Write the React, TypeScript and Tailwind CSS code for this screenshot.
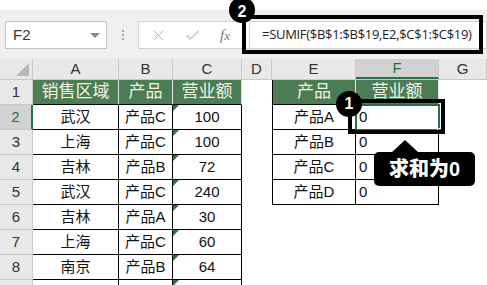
import React from "react";
import { X, Check } from "lucide-react";

const FONT = { fontFamily: '"Liberation Sans", "Noto Sans CJK SC", sans-serif' };

type Cell = { t: string; align?: "c" | "l"; hdr?: boolean; tri?: boolean; br?: boolean; bb?: boolean; bl?: boolean };

const widths = [86, 54, 69, 30, 84, 83, 48];

const left: [string, string, string][] = [
  ["武汉", "产品C", "100"],
  ["上海", "产品C", "100"],
  ["吉林", "产品B", "72"],
  ["武汉", "产品C", "240"],
  ["吉林", "产品A", "30"],
  ["上海", "产品C", "60"],
  ["南京", "产品B", "64"],
  ["", "", ""],
];
const right = ["产品A", "产品B", "产品C", "产品D"];

function buildRow(r: number): Cell[] {
  const cells: Cell[] = [];
  if (r === 1) {
    cells.push({ t: "销售区域", hdr: true, br: true, bb: true });
    cells.push({ t: "产品", hdr: true, br: true, bb: true });
    cells.push({ t: "营业额", hdr: true, br: true, bb: true });
    cells.push({ t: "" });
    cells.push({ t: "产品", hdr: true, br: true, bb: true, bl: true });
    cells.push({ t: "营业额", hdr: true, br: true, bb: true });
    cells.push({ t: "" });
    return cells;
  }
  const d = left[r - 2];
  cells.push({ t: d[0], br: true, bb: true });
  cells.push({ t: d[1], br: true, bb: true });
  cells.push({ t: d[2], br: true, bb: true, tri: true });
  if (r <= 5) {
    cells.push({ t: "" });
    cells.push({ t: right[r - 2], br: true, bb: true, bl: true });
    cells.push({ t: "0", align: "l", br: true, bb: true });
  } else {
    cells.push({ t: "" });
    cells.push({ t: "" });
    cells.push({ t: "" });
  }
  cells.push({ t: "" });
  return cells;
}

export default function App() {
  const rows = [1, 2, 3, 4, 5, 6, 7, 8, 9];
  const colLetters = ["A", "B", "C", "D", "E", "F", "G"];
  return (
    <div className="relative w-[487px] h-[285px] overflow-hidden bg-white" style={FONT}>
      <div className="h-[10px] bg-white" />
      {/* toolbar */}
      <div className="h-[49px] bg-[#f0f0f0] flex items-start pt-[11px]">
        <div className="ml-[5px] w-[102px] h-[28px] bg-white border border-[#c6c6c6] flex items-center justify-between pl-[7px] pr-[6px]">
          <span className="text-[15px] text-[#333]">F2</span>
          <span className="w-0 h-0 border-l-[5px] border-r-[5px] border-t-[5px] border-l-transparent border-r-transparent border-t-[#8a8a8a]" />
        </div>
        <div className="w-[31px] h-[28px] flex flex-col items-center justify-center gap-[2px]">
          <span className="w-[2px] h-[2px] bg-[#a8a8a8]" />
          <span className="w-[2px] h-[2px] bg-[#a8a8a8]" />
          <span className="w-[2px] h-[2px] bg-[#a8a8a8]" />
        </div>
        <div className="w-[111px] h-[28px] bg-white border border-[#d4d4d4] border-r-0 flex items-center">
          <X size={17} strokeWidth={1.4} color="#b8b8b8" className="ml-[11px]" />
          <Check size={17} strokeWidth={2} color="#c4c4c4" className="ml-[17px]" />
          <span className="ml-[19px] text-[15px] italic text-[#7a7a7a]" style={{ fontFamily: '"Liberation Serif", serif' }}>
            f<span className="text-[13px]">x</span>
          </span>
        </div>
        <div className="flex-1 h-[28px] bg-white border border-[#d4d4d4] flex items-center pl-[12px]">
          <span className="text-[13px] text-[#222] whitespace-nowrap tracking-[-0.3px]" style={{ fontFamily: '"Open Sans", "Liberation Sans", sans-serif' }}>
            =SUMIF($B$1:$B$19,E2,$C$1:$C$19)
          </span>
        </div>
      </div>
      {/* column headers */}
      <div className="flex h-[21px] bg-[#e9e9e9] border-b border-[#c8c8c8]">
        <div className="w-[33px] h-full border-r border-[#c8c8c8] relative">
          <svg className="absolute right-[3px] bottom-[3px]" width="13" height="13"><polygon points="13,0 13,13 0,13" fill="#b9b9b9" /></svg>
        </div>
        {colLetters.map((c, i) => (
          <div
            key={c}
            style={{ width: widths[i] }}
            className={
              "h-full flex items-center justify-center text-[15px] border-r border-[#c8c8c8] " +
              (c === "F" ? "bg-[#d2d2d2] text-[#217346] border-b-2 border-b-[#217346]" : "text-[#333]")
            }
          >
            {c}
          </div>
        ))}
      </div>
      {/* rows */}
      {rows.map((r) => {
        const cells = buildRow(r);
        return (
          <div key={r} className="flex h-[25px]">
            <div
              className={
                "w-[33px] h-full flex items-center justify-center text-[15px] border-b border-[#c8c8c8] " +
                (r === 2 ? "bg-[#d2d2d2] text-[#217346] border-r-2 border-r-[#217346]" : "bg-[#e9e9e9] text-[#333] border-r border-r-[#c8c8c8]")
              }
            >
              {r < 9 ? r : ""}
            </div>
            {cells.map((c, i) => (
              <div
                key={i}
                style={{ width: widths[i] }}
                className={
                  "relative h-full flex items-center " +
                  (c.align === "l" ? "justify-start pl-[3px] " : "justify-center ") +
                  (c.hdr ? "bg-[#4b7c53] text-[#f3f3e8] text-[17px] " : "text-[15px] text-[#111] ") +
                  (c.br ? (c.hdr ? "border-r border-r-[#dcdcdc] " : "border-r border-r-black ") : "") +
                  (c.bb ? "border-b border-b-black " : "") +
                  (c.bl ? "border-l border-l-black " : "")
                }
              >
                {c.tri && (
                  <span className="absolute left-0 top-0 w-0 h-0 border-t-[6px] border-r-[6px] border-t-[#1f7a32] border-r-transparent" />
                )}
                {c.t}
              </div>
            ))}
          </div>
        );
      })}

      {/* selected cell F2 */}
      <div className="absolute left-[355px] top-[104px] w-[85px] h-[27px] border-2 border-[#217346]">
        <span className="absolute right-[-4px] bottom-[-4px] w-[5px] h-[5px] bg-[#217346] border border-white" />
      </div>
      {/* callout rect around F2 */}
      <div className="absolute left-[348px] top-[99px] w-[97px] h-[35px] border-[4px] border-black" />
      {/* badge 1 */}
      <div className="absolute left-[336px] top-[91px] w-[26px] h-[26px] rounded-full bg-black text-white flex items-center justify-center text-[16px] font-bold">
        1
      </div>
      {/* callout rect around formula */}
      <div className="absolute left-[242px] top-[15px] w-[241px] h-[39px] border-[4px] border-black" />
      {/* badge 2 */}
      <div className="absolute left-[229px] top-[-3px] w-[26px] h-[26px] rounded-full bg-black text-white flex items-center justify-center text-[16px] font-bold pt-[3px]">
        2
      </div>
      {/* tooltip */}
      <div className="absolute left-[374px] top-[140px]">
        <svg className="absolute left-[17px] top-0" width="28" height="13">
          <polygon points="14,0 28,13 0,13" fill="black" />
        </svg>
        <div className="absolute left-0 top-[12px] w-[101px] h-[34px] rounded-[5px] bg-black text-white flex items-center justify-center text-[20px] font-black" style={{ fontFamily: '"Liberation Sans", "Noto Sans CJK SC", sans-serif' }}>
          求和为0
        </div>
      </div>
    </div>
  );
}
